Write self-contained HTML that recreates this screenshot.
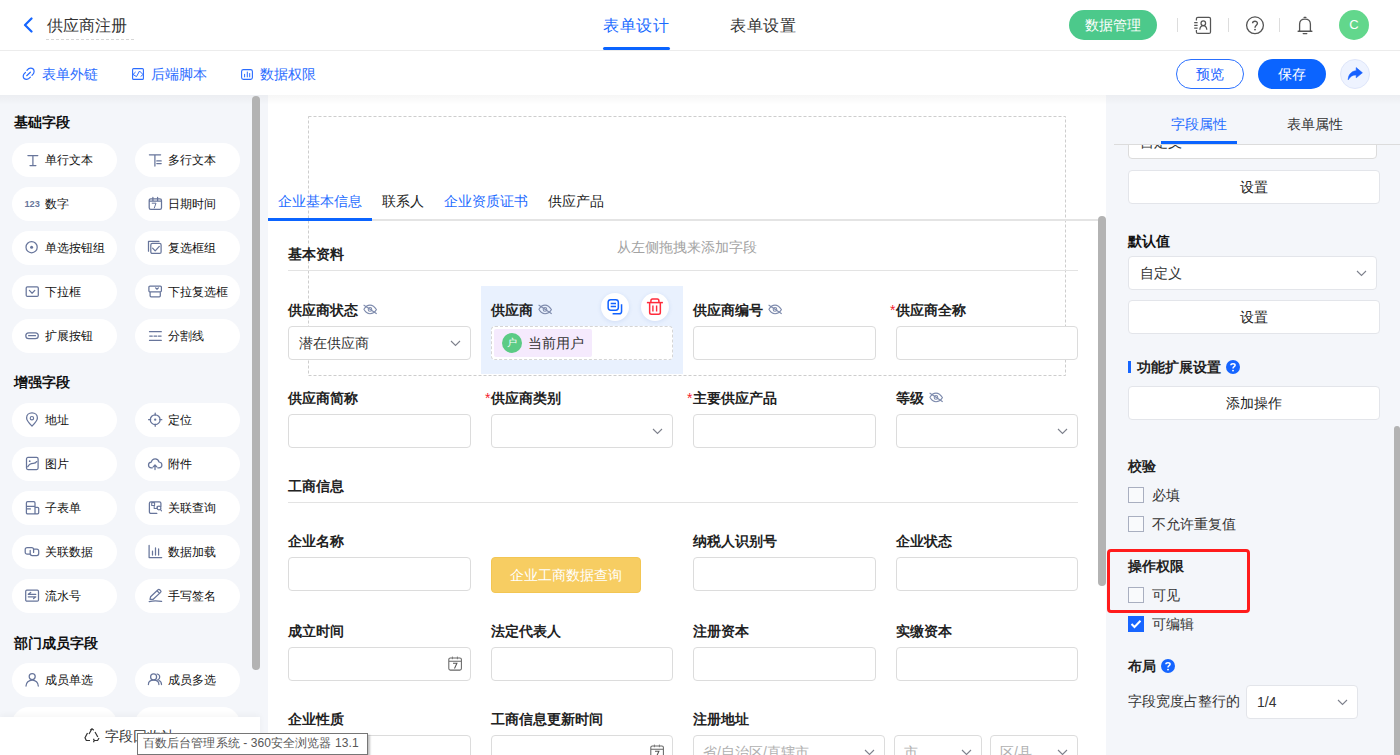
<!DOCTYPE html>
<html><head><meta charset="utf-8">
<style>
*{box-sizing:border-box;margin:0;padding:0}
html,body{width:1400px;height:755px;overflow:hidden;background:#fff}
body{font-family:"Liberation Sans",sans-serif;color:#222;position:relative;font-size:14px}
.a{position:absolute}
.t{position:absolute;white-space:nowrap;line-height:20px}
.hdr{left:0;top:0;width:1400px;height:51px;border-bottom:1px solid #ececec;background:#fff}
.tb{left:0;top:51px;width:1400px;height:44px;background:#fff}
.lp{left:0;top:95px;width:268px;height:660px;background:#f4f6fa}
.cp{left:268px;top:95px;width:838px;height:660px;background:#fff}
.rp{left:1106px;top:95px;width:294px;height:660px;background:#f4f6fa}
.shadow{left:0;top:95px;width:1400px;height:10px;background:linear-gradient(rgba(0,0,0,0.035),rgba(0,0,0,0))}
.h3{font-weight:700;font-size:14px;color:#111;-webkit-text-stroke:0}
.pill{position:absolute;width:105px;height:34px;border-radius:17px;background:#fff}
.pill .ic{position:absolute;left:13px;top:9px;width:16px;height:16px}
.pill .tx{position:absolute;left:33px;top:7px;font-size:12px;line-height:20px;color:#111;white-space:nowrap}
.lbl{font-weight:700;font-size:14px;color:#222;-webkit-text-stroke:0}
.inp{position:absolute;height:34px;border:1px solid #dcdcdc;border-radius:4px;background:#fff}
.req{color:#f5222d}
.sb{position:absolute;background:#b3b3b3;border-radius:4px}
.btnw{position:absolute;background:#fff;border:1px solid #e3e5ea;border-radius:4px;text-align:center;font-size:14px;line-height:32px;color:#222}
.cb{position:absolute;width:16px;height:16px;border:1px solid #a9afc0;border-radius:0;background:#f9fafc}
</style></head><body>
<!-- header -->
<div class="a hdr"></div>
<svg class="a" style="left:22px;top:17px" width="12" height="16" viewBox="0 0 12 16"><path d="M9.5 1.5 L3 8 L9.5 14.5" fill="none" stroke="#1565ff" stroke-width="2.2" stroke-linecap="round" stroke-linejoin="round"/></svg>
<div class="t" style="left:47px;top:15px;font-size:16px;line-height:22px;color:#333">供应商注册</div>
<div class="a" style="left:46px;top:39px;width:88px;height:0;border-top:1px dashed #d6d6d6"></div>
<div class="t" style="left:603px;top:15px;font-size:16px;line-height:22px;letter-spacing:0.7px;color:#1a6bff">表单设计</div>
<div class="a" style="left:603px;top:47px;width:67px;height:3px;border-radius:2px;background:#0a64ff"></div>
<div class="t" style="left:730px;top:15px;font-size:16px;line-height:22px;letter-spacing:0.7px;color:#333">表单设置</div>
<div class="a" style="left:1069px;top:10px;width:88px;height:30px;border-radius:15px;background:#4cc98b;color:#fff;text-align:center;line-height:30px;font-size:14px;font-weight:500">数据管理</div>
<div class="a" style="left:1177px;top:18px;width:1px;height:14px;background:#ddd"></div>
<div class="a" style="left:1228px;top:18px;width:1px;height:14px;background:#ddd"></div>
<div class="a" style="left:1279px;top:18px;width:1px;height:14px;background:#ddd"></div>
<!-- contact icon -->
<svg class="a" style="left:1193px;top:16px" width="19" height="19" viewBox="0 0 19 19"><path d="M3.4 4.6 V2.8 C3.4 1.9 4 1.3 4.9 1.3 H16 C16.9 1.3 17.5 1.9 17.5 2.8 V15.9 C17.5 16.8 16.9 17.4 16 17.4 H4.9 C4 17.4 3.4 16.8 3.4 15.9 V14" fill="none" stroke="#555" stroke-width="1.25"/><circle cx="10.3" cy="7.2" r="2.3" fill="none" stroke="#555" stroke-width="1.25"/><path d="M6.8 13.8 C7 10.8 8.5 9.5 10.3 9.5 C12.1 9.5 13.6 10.8 13.8 13.8" fill="none" stroke="#555" stroke-width="1.25"/><path d="M1.2 6.5h3.4M1.2 9.4h3.4M1.2 12.2h3.4" stroke="#555" stroke-width="1.25"/></svg>
<!-- help -->
<svg class="a" style="left:1245px;top:16px" width="20" height="20" viewBox="0 0 20 20"><circle cx="10" cy="9.3" r="8.4" fill="none" stroke="#555" stroke-width="1.3"/><path d="M7.6 7.3 C7.6 4.6 12.4 4.6 12.4 7.3 C12.4 9.2 10 9.3 10 11.8" fill="none" stroke="#555" stroke-width="1.4"/><circle cx="10" cy="13.6" r="0.95" fill="#555"/></svg>
<!-- bell -->
<svg class="a" style="left:1297px;top:16px" width="16" height="19" viewBox="0 0 16 19"><path d="M7.1 1.4h1.8" stroke="#555" stroke-width="1.3" stroke-linecap="round"/><path d="M2.6 15 V8.2 C2.6 4.8 4.8 3.1 8 3.1 C11.2 3.1 13.4 4.8 13.4 8.2 V15" fill="none" stroke="#555" stroke-width="1.3"/><path d="M1.2 15.3h13.6" stroke="#555" stroke-width="1.5" stroke-linecap="round"/><path d="M6.2 17.6h3.6" stroke="#555" stroke-width="1.3" stroke-linecap="round"/></svg>
<div class="a" style="left:1339px;top:10px;width:30px;height:30px;border-radius:15px;background:#62d78c;color:#fff;text-align:center;line-height:30px;font-size:13px">C</div>

<!-- toolbar -->
<div class="a tb"></div>
<svg class="a" style="left:22px;top:67px" width="14" height="14" viewBox="0 0 14 14"><path d="M4.9 3.4 C6 2 7 1.2 8.6 1.2 C10.6 1.2 12.1 2.8 12.1 4.7 C12.1 6.2 11.2 7.2 10 8.4 M3.4 5.5 C2 6.7 1.2 7.5 1.2 9 C1.2 11 2.8 12.4 4.8 12.4 C6.3 12.4 7.3 11.5 8.4 10.2 M4.7 8.7 L8.4 5.2" fill="none" stroke="#2a6cff" stroke-width="1.2" stroke-linecap="round"/></svg>
<div class="t" style="left:42px;top:64px;color:#2b6cff">表单外链</div>
<svg class="a" style="left:132px;top:68px" width="12" height="12" viewBox="0 0 12 12"><rect x="0.6" y="0.6" width="10.8" height="10.8" rx="1" fill="none" stroke="#2a6cff" stroke-width="1.1"/><path d="M3.6 4 L1 6.5 L4.5 8.6 L7.5 3 L11 6.5 L8.6 8.6" fill="none" stroke="#2a6cff" stroke-width="1" stroke-linejoin="round"/></svg>
<div class="t" style="left:151px;top:64px;color:#2b6cff">后端脚本</div>
<svg class="a" style="left:241px;top:69px" width="12" height="11" viewBox="0 0 12 11"><rect x="0.6" y="0.6" width="10.8" height="9.8" rx="1.8" fill="none" stroke="#2a6cff" stroke-width="1.1"/><path d="M3.6 5.3v2.6M6.3 3v4.9M8.7 4.5v3.4" stroke="#2a6cff" stroke-width="1" stroke-linecap="round"/></svg>
<div class="t" style="left:260px;top:64px;color:#2b6cff">数据权限</div>
<div class="a" style="left:1176px;top:59px;width:68px;height:30px;border:1px solid #2a70ff;border-radius:15px;color:#1a5fff;text-align:center;line-height:28px;font-size:14px;font-weight:500">预览</div>
<div class="a" style="left:1258px;top:59px;width:68px;height:30px;border-radius:15px;background:#0b64ff;color:#fff;text-align:center;line-height:30px;font-size:14px;font-weight:500">保存</div>
<div class="a" style="left:1340px;top:59px;width:30px;height:30px;border-radius:15px;background:#eef3ff;border:1px solid #dfe6fa"></div>
<svg class="a" style="left:1347px;top:67px" width="16" height="14" viewBox="0 0 16 14"><path d="M9.2 0.6 L15.4 5.8 L9.2 10.8 V7.9 C5.4 7.9 3.2 9.4 1.2 12.8 C1.3 7.6 4.4 4.1 9.2 3.7 Z" fill="#1560ff" stroke="#1560ff" stroke-width="0.6" stroke-linejoin="round"/></svg>

<div class="a lp"></div>
<div class="a cp"></div>
<div class="a rp"></div>
<div class="a shadow"></div>
<div class="t h3" style="left:14px;top:112px">基础字段</div>
<div class="pill" style="left:12px;top:143px"><svg class="ic" width="16" height="16" viewBox="0 0 16 16" style="overflow:visible"><path d="M2.9 3.5H12.8M7.9 3.5V13.5M5 13.5H10.9" stroke="#67759b" stroke-width="1.25" fill="none" stroke-linecap="round" stroke-linejoin="round"/></svg><div class="tx">单行文本</div></div>
<div class="pill" style="left:135px;top:143px"><svg class="ic" width="16" height="16" viewBox="0 0 16 16" style="overflow:visible"><path d="M1.4 2.8H12.6M6.9 2.8V14M8.8 8.9H13.2M8.8 11.6H13.2" stroke="#67759b" stroke-width="1.25" fill="none" stroke-linecap="round" stroke-linejoin="round"/></svg><div class="tx">多行文本</div></div>
<div class="pill" style="left:12px;top:187px"><svg class="ic" width="16" height="16" viewBox="0 0 16 16" style="overflow:visible"><text x="-0.6" y="11.2" font-size="9.6" font-weight="700" fill="#67759b" font-family="Liberation Sans" textLength="15.4" lengthAdjust="spacingAndGlyphs">123</text></svg><div class="tx">数字</div></div>
<div class="pill" style="left:135px;top:187px"><svg class="ic" width="16" height="16" viewBox="0 0 16 16" style="overflow:visible"><path d="M2.8 2.8H11.9C12.8 2.8 13.5 3.5 13.5 4.4V11.8C13.5 12.7 12.8 13.4 11.9 13.4H2.8C1.9 13.4 1.2 12.7 1.2 11.8V4.4C1.2 3.5 1.9 2.8 2.8 2.8ZM1.2 5.2H13.5M4.9 1.4V4.6M9.6 1.4V4.6" stroke="#67759b" stroke-width="1.25" fill="none" stroke-linecap="round" stroke-linejoin="round"/><path d="M4.2 7.2H8L6.3 12" stroke="#67759b" stroke-width="1.0" fill="none" stroke-linecap="round" stroke-linejoin="round"/></svg><div class="tx">日期时间</div></div>
<div class="pill" style="left:12px;top:231px"><svg class="ic" width="16" height="16" viewBox="0 0 16 16" style="overflow:visible"><circle cx="6.6" cy="7.2" r="5.6" stroke="#67759b" stroke-width="1.25" fill="none"/><circle cx="6.6" cy="7.2" r="1.5" fill="#67759b"/></svg><div class="tx">单选按钮组</div></div>
<div class="pill" style="left:135px;top:231px"><svg class="ic" width="16" height="16" viewBox="0 0 16 16" style="overflow:visible"><path d="M0.5 11.2V1.3H11" stroke="#67759b" stroke-width="1.25" fill="none" stroke-linecap="round" stroke-linejoin="round"/><path d="M4.3 3.4H11.6C12.4 3.4 13.1 4.1 13.1 4.9V11.9C13.1 12.7 12.4 13.4 11.6 13.4H4.3C3.5 13.4 2.8 12.7 2.8 11.9V4.9C2.8 4.1 3.5 3.4 4.3 3.4ZM4.6 8.1L7.2 10.9L11.3 6.4" stroke="#67759b" stroke-width="1.25" fill="none" stroke-linecap="round" stroke-linejoin="round"/></svg><div class="tx">复选框组</div></div>
<div class="pill" style="left:12px;top:275px"><svg class="ic" width="16" height="16" viewBox="0 0 16 16" style="overflow:visible"><path d="M2.4 2.9H12.1C12.8 2.9 13.3 3.4 13.3 4.1V11.2C13.3 11.9 12.8 12.4 12.1 12.4H2.4C1.7 12.4 1.2 11.9 1.2 11.2V4.1C1.2 3.4 1.7 2.9 2.4 2.9ZM4.4 6.4L7.1 9.2L9.8 6.4" stroke="#67759b" stroke-width="1.25" fill="none" stroke-linecap="round" stroke-linejoin="round"/></svg><div class="tx">下拉框</div></div>
<div class="pill" style="left:135px;top:275px"><svg class="ic" width="16" height="16" viewBox="0 0 16 16" style="overflow:visible"><path d="M2 2H12.3C12.9 2 13.4 2.5 13.4 3.1V6.8C13.4 7.4 12.9 7.9 12.3 7.9H2C1.4 7.9 0.9 7.4 0.9 6.8V3.1C0.9 2.5 1.4 2 2 2ZM2.1 7.9V11.8C2.1 12.4 2.6 12.8 3.1 12.8H11.3C11.9 12.8 12.3 12.4 12.3 11.8V7.9M7.6 3.9L9 5.2L10.4 3.9" stroke="#67759b" stroke-width="1.25" fill="none" stroke-linecap="round" stroke-linejoin="round"/></svg><div class="tx">下拉复选框</div></div>
<div class="pill" style="left:12px;top:319px"><svg class="ic" width="16" height="16" viewBox="0 0 16 16" style="overflow:visible"><rect x="0.8" y="4.8" width="12.5" height="5.9" rx="2.95" stroke="#67759b" stroke-width="1.25" fill="none"/><path d="M3.6 7.7H10.5" stroke="#67759b" stroke-width="1.25" fill="none" stroke-linecap="round" stroke-linejoin="round"/></svg><div class="tx">扩展按钮</div></div>
<div class="pill" style="left:135px;top:319px"><svg class="ic" width="16" height="16" viewBox="0 0 16 16" style="overflow:visible"><path d="M1.5 3.7H13.3M1.5 12.4H13.3" stroke="#67759b" stroke-width="1.25" fill="none" stroke-linecap="round" stroke-linejoin="round"/><path d="M1.7 8.1H4.3M6 8.1H8.8M10.4 8.1H13.1" stroke="#67759b" stroke-width="1.25" fill="none" stroke-linecap="round" stroke-linejoin="round"/></svg><div class="tx">分割线</div></div>
<div class="t h3" style="left:14px;top:372px">增强字段</div>
<div class="pill" style="left:12px;top:403px"><svg class="ic" width="16" height="16" viewBox="0 0 16 16" style="overflow:visible"><path d="M7 14.1C3.6 10.6 1.6 8.4 1.6 5.9C1.6 2.9 4 0.9 7 0.9C10 0.9 12.4 2.9 12.4 5.9C12.4 8.4 10.4 10.6 7 14.1Z" stroke="#67759b" stroke-width="1.25" fill="none" stroke-linecap="round" stroke-linejoin="round"/><circle cx="6.9" cy="6.2" r="1.7" stroke="#67759b" stroke-width="1.15" fill="none"/></svg><div class="tx">地址</div></div>
<div class="pill" style="left:135px;top:403px"><svg class="ic" width="16" height="16" viewBox="0 0 16 16" style="overflow:visible"><circle cx="7.2" cy="7.7" r="4.9" stroke="#67759b" stroke-width="1.25" fill="none"/><circle cx="7.2" cy="7.7" r="1.15" fill="#67759b"/><path d="M7.2 1.1V3.2M7.2 12.2V14.3M0.6 7.7H2.7M11.7 7.7H13.8" stroke="#67759b" stroke-width="1.25" fill="none" stroke-linecap="round" stroke-linejoin="round"/></svg><div class="tx">定位</div></div>
<div class="pill" style="left:12px;top:447px"><svg class="ic" width="16" height="16" viewBox="0 0 16 16" style="overflow:visible"><path d="M3 1.4H11.6C12.4 1.4 13.1 2.1 13.1 2.9V12.1C13.1 12.9 12.4 13.6 11.6 13.6H3C2.2 13.6 1.5 12.9 1.5 12.1V2.9C1.5 2.1 2.2 1.4 3 1.4ZM2.8 10.8C3.8 8.6 5.2 7.4 8.2 7.3C10.2 7.2 11 6.6 11.6 5.6" stroke="#67759b" stroke-width="1.25" fill="none" stroke-linecap="round" stroke-linejoin="round"/><circle cx="4.7" cy="5.2" r="0.9" fill="#67759b"/></svg><div class="tx">图片</div></div>
<div class="pill" style="left:135px;top:447px"><svg class="ic" width="16" height="16" viewBox="0 0 16 16" style="overflow:visible"><path d="M4.3 11.8H3.5C1.8 11.8 0.5 10.6 0.5 9C0.5 7.4 1.7 6.2 3.3 6.1C3.8 4.2 5.3 2.8 7.2 2.8C9.1 2.8 10.6 4.2 11 6C12.6 6.2 13.9 7.4 13.9 9C13.9 10.6 12.6 11.8 11 11.8H9.8M7 13.6V9.2M5.2 10.9L7 9L8.8 10.9" stroke="#67759b" stroke-width="1.25" fill="none" stroke-linecap="round" stroke-linejoin="round"/></svg><div class="tx">附件</div></div>
<div class="pill" style="left:12px;top:491px"><svg class="ic" width="16" height="16" viewBox="0 0 16 16" style="overflow:visible"><path d="M2.6 1.7H8.8C9.5 1.7 10 2.2 10 2.9V13.9H2.6C1.9 13.9 1.4 13.4 1.4 12.7V2.9C1.4 2.2 1.9 1.7 2.6 1.7ZM1.4 6.3H10M1.4 8.9H5.4M10 7.3H12.6C13.2 7.3 13.7 7.8 13.7 8.4V12.8C13.7 13.4 13.2 13.9 12.6 13.9H10" stroke="#67759b" stroke-width="1.25" fill="none" stroke-linecap="round" stroke-linejoin="round"/></svg><div class="tx">子表单</div></div>
<div class="pill" style="left:135px;top:491px"><svg class="ic" width="16" height="16" viewBox="0 0 16 16" style="overflow:visible"><path d="M8.8 13.4H2.9C2.1 13.4 1.4 12.7 1.4 11.9V3.3C1.4 2.5 2.1 1.8 2.9 1.8H11.4C12.2 1.8 12.9 2.5 12.9 3.3V6.5" stroke="#67759b" stroke-width="1.25" fill="none" stroke-linecap="round" stroke-linejoin="round"/><path d="M3.7 2.6V5.4H6.6V2.6ZM6.2 6.3V8.5H9.2V6.3" stroke="#67759b" stroke-width="1.05" fill="none" stroke-linecap="round" stroke-linejoin="round"/><circle cx="11" cy="8" r="1.9" stroke="#67759b" stroke-width="1.15" fill="none"/><path d="M12.4 9.4L13.5 10.9" stroke="#67759b" stroke-width="1.15" fill="none" stroke-linecap="round" stroke-linejoin="round"/></svg><div class="tx">关联查询</div></div>
<div class="pill" style="left:12px;top:535px"><svg class="ic" width="16" height="16" viewBox="0 0 16 16" style="overflow:visible"><path d="M5 10.2H2.2C1.1 10.2 0.2 9.3 0.2 8.2V5.6C0.2 4.5 1.1 3.6 2.2 3.6H6.6C7.7 3.6 8.6 4.5 8.6 5.6V8.4" stroke="#67759b" stroke-width="1.25" fill="none" stroke-linecap="round" stroke-linejoin="round"/><path d="M5.2 6.4V9.5C5.2 10.6 6.1 11.5 7.2 11.5H11.7C12.8 11.5 13.7 10.6 13.7 9.5V7.1C13.7 6 12.8 5.1 11.7 5.1H8.6" stroke="#67759b" stroke-width="1.25" fill="none" stroke-linecap="round" stroke-linejoin="round"/></svg><div class="tx">关联数据</div></div>
<div class="pill" style="left:135px;top:535px"><svg class="ic" width="16" height="16" viewBox="0 0 16 16" style="overflow:visible"><path d="M1.1 1.4V13.5H13.7M4.5 7.2V11M7.5 3.9V11M10.6 4.9V11" stroke="#67759b" stroke-width="1.25" fill="none" stroke-linecap="round" stroke-linejoin="round"/></svg><div class="tx">数据加载</div></div>
<div class="pill" style="left:12px;top:579px"><svg class="ic" width="16" height="16" viewBox="0 0 16 16" style="overflow:visible"><path d="M1.9 2.2H12.3C12.9 2.2 13.5 2.8 13.5 3.4V12C13.5 12.6 12.9 13.2 12.3 13.2H1.9C1.3 13.2 0.7 12.6 0.7 12V3.4C0.7 2.8 1.3 2.2 1.9 2.2ZM3.3 6.3H10.8M5.7 4.4L3.3 6.3M3.3 8.8H10.8M10.8 8.8L8.6 10.6" stroke="#67759b" stroke-width="1.25" fill="none" stroke-linecap="round" stroke-linejoin="round"/></svg><div class="tx">流水号</div></div>
<div class="pill" style="left:135px;top:579px"><svg class="ic" width="16" height="16" viewBox="0 0 16 16" style="overflow:visible"><path d="M2 11.3L2.6 8.8L10 1.8C10.5 1.3 11.2 1.3 11.7 1.8L12.6 2.7C13.1 3.2 13.1 3.9 12.6 4.4L5.2 11.3ZM9 2.8L11.6 5.4M1.2 13.6C5 12.6 9 12.6 13.6 13.4" stroke="#67759b" stroke-width="1.25" fill="none" stroke-linecap="round" stroke-linejoin="round"/></svg><div class="tx">手写签名</div></div>
<div class="t h3" style="left:14px;top:633px">部门成员字段</div>
<div class="pill" style="left:12px;top:663px"><svg class="ic" width="16" height="16" viewBox="0 0 16 16" style="overflow:visible"><circle cx="7.2" cy="4.6" r="3" stroke="#67759b" stroke-width="1.25" fill="none"/><path d="M1 14.1C1 10.5 3.8 8 7.2 8C10.6 8 13.3 10.5 13.3 14.1" stroke="#67759b" stroke-width="1.25" fill="none" stroke-linecap="round" stroke-linejoin="round"/></svg><div class="tx">成员单选</div></div>
<div class="pill" style="left:135px;top:663px"><svg class="ic" width="16" height="16" viewBox="0 0 16 16" style="overflow:visible"><circle cx="5.6" cy="4.9" r="3" stroke="#67759b" stroke-width="1.25" fill="none"/><path d="M0.4 12.5C0.4 9.8 2.7 8.2 5.6 8.2C8.5 8.2 10.9 9.8 10.9 12.5M9.2 2C10.7 2.3 11.7 3.5 11.7 4.9C11.7 6.3 10.9 7.3 9.8 7.8M11 8.5C12.5 9.2 13.5 10.5 13.5 12.5" stroke="#67759b" stroke-width="1.25" fill="none" stroke-linecap="round" stroke-linejoin="round"/></svg><div class="tx">成员多选</div></div>
<div class="pill" style="left:12px;top:707px"></div>
<div class="pill" style="left:135px;top:707px"></div>
<div class="sb" style="left:252px;top:96px;width:8px;height:574px"></div><svg class="a" style="left:308px;top:116px" width="758" height="260" viewBox="0 0 758 260"><rect x="0.5" y="0.5" width="757" height="259" fill="none" stroke="#cdcdcd" stroke-width="1" stroke-dasharray="3 2"/></svg>
<div class="t" style="left:617px;top:237px;color:#a3a3a3">从左侧拖拽来添加字段</div>
<div class="a" style="left:268px;top:219px;width:830px;height:2px;background:#e4e4e4"></div>
<div class="a" style="left:268px;top:218px;width:104px;height:3px;background:#0b64ff"></div>
<div class="t" style="left:278px;top:191px;color:#1e6cff">企业基本信息</div>
<div class="t" style="left:382px;top:191px;color:#222">联系人</div>
<div class="t" style="left:444px;top:191px;color:#1e6cff">企业资质证书</div>
<div class="t" style="left:548px;top:191px;color:#222">供应产品</div>
<div class="t lbl" style="left:288px;top:244px">基本资料</div>
<div class="a" style="left:288px;top:270px;width:790px;height:1px;background:#e3e3e3"></div>
<div class="a" style="left:481px;top:286px;width:202px;height:88px;background:#e9f1fe"></div>
<div class="t lbl" style="left:288px;top:300px">供应商状态</div>
<svg class="a" style="left:363px;top:304px" width="15" height="11" viewBox="0 0 15 11"><path d="M0.9 5.3 C2.6 2.4 4.6 1.1 7 1.1 C9.4 1.1 11.5 2.4 13.4 5.6 C11.5 8.6 9.4 9.7 7 9.7 C4.6 9.7 2.6 8.5 0.9 5.3 Z" fill="none" stroke="#7e8bad" stroke-width="1.05"/><circle cx="7" cy="5.4" r="1.8" fill="none" stroke="#7e8bad" stroke-width="1.05"/><path d="M0.6 1 L13.7 9.8" stroke="#7e8bad" stroke-width="1.05"/></svg>
<div class="inp" style="left:288px;top:326px;width:183px;height:34px"></div>
<svg class="a" style="left:450px;top:340px" width="11" height="7" viewBox="0 0 11 7"><path d="M1 1 L5.5 5.5 L10 1" fill="none" stroke="#7d818c" stroke-width="1.1"/></svg>
<div class="t" style="left:299px;top:333px;color:#333">潜在供应商</div>
<div class="t lbl" style="left:491px;top:300px">供应商</div>
<svg class="a" style="left:538px;top:304px" width="15" height="11" viewBox="0 0 15 11"><path d="M0.9 5.3 C2.6 2.4 4.6 1.1 7 1.1 C9.4 1.1 11.5 2.4 13.4 5.6 C11.5 8.6 9.4 9.7 7 9.7 C4.6 9.7 2.6 8.5 0.9 5.3 Z" fill="none" stroke="#7e8bad" stroke-width="1.05"/><circle cx="7" cy="5.4" r="1.8" fill="none" stroke="#7e8bad" stroke-width="1.05"/><path d="M0.6 1 L13.7 9.8" stroke="#7e8bad" stroke-width="1.05"/></svg>
<div class="a" style="left:491px;top:326px;width:182px;height:34px;border:1px dashed #d5d5d5;border-radius:4px;background:#fff"></div>
<div class="a" style="left:494px;top:329px;width:98px;height:28px;border-radius:2px;background:#f5eafd"></div>
<div class="a" style="left:502px;top:333px;width:20px;height:20px;border-radius:10px;background:#5bcb85;color:#fff;font-size:10px;line-height:20px;text-align:center">户</div>
<div class="t" style="left:528px;top:333px;color:#333">当前用户</div>
<div class="a" style="left:601px;top:293px;width:28px;height:28px;border-radius:14px;background:#fff;box-shadow:0 1px 4px rgba(30,80,180,0.12)"></div>
<svg class="a" style="left:607px;top:298px" width="17" height="17" viewBox="0 0 17 17"><rect x="1.15" y="1.65" width="10.2" height="10.5" rx="2.6" fill="none" stroke="#1262ff" stroke-width="1.5"/><path d="M3.7 5.4H9M3.7 8.6H9" stroke="#1262ff" stroke-width="1.5"/><path d="M14.55 6.3 V13.5 C14.55 14.9 13.5 15.85 12.1 15.85 H5.6" fill="none" stroke="#1262ff" stroke-width="1.5"/></svg>
<div class="a" style="left:641px;top:293px;width:28px;height:28px;border-radius:14px;background:#fff;box-shadow:0 1px 4px rgba(30,80,180,0.12)"></div>
<svg class="a" style="left:646px;top:298px" width="18" height="18" viewBox="0 0 18 18"><path d="M0.9 4.6 H16.9" stroke="#ff2b3b" stroke-width="1.5"/><path d="M4.9 4.6 V3 C4.9 1.9 5.4 1.1 6.5 1.1 H11.3 C12.4 1.1 12.9 1.9 12.9 3 V4.6" fill="none" stroke="#ff2b3b" stroke-width="1.5"/><path d="M3.65 4.6 V14.4 C3.65 15.5 4.3 16.15 5.4 16.15 H12.6 C13.7 16.15 14.35 15.5 14.35 14.4 V4.6" fill="none" stroke="#ff2b3b" stroke-width="1.5"/><path d="M6.9 7.4 V13.4 M10.6 7.4 V13.4" stroke="#ff2b3b" stroke-width="1.4"/></svg>
<div class="t lbl" style="left:693px;top:300px">供应商编号</div>
<svg class="a" style="left:768px;top:304px" width="15" height="11" viewBox="0 0 15 11"><path d="M0.9 5.3 C2.6 2.4 4.6 1.1 7 1.1 C9.4 1.1 11.5 2.4 13.4 5.6 C11.5 8.6 9.4 9.7 7 9.7 C4.6 9.7 2.6 8.5 0.9 5.3 Z" fill="none" stroke="#7e8bad" stroke-width="1.05"/><circle cx="7" cy="5.4" r="1.8" fill="none" stroke="#7e8bad" stroke-width="1.05"/><path d="M0.6 1 L13.7 9.8" stroke="#7e8bad" stroke-width="1.05"/></svg>
<div class="inp" style="left:693px;top:326px;width:183px;height:34px"></div>
<div class="t req" style="left:890px;top:300px;font-size:14px">*</div>
<div class="t lbl" style="left:896px;top:300px">供应商全称</div>
<div class="inp" style="left:896px;top:326px;width:182px;height:34px"></div>
<div class="t lbl" style="left:288px;top:388px">供应商简称</div>
<div class="inp" style="left:288px;top:414px;width:183px;height:34px"></div>
<div class="t req" style="left:485px;top:388px;font-size:14px">*</div>
<div class="t lbl" style="left:491px;top:388px">供应商类别</div>
<div class="inp" style="left:491px;top:414px;width:182px;height:34px"></div>
<svg class="a" style="left:652px;top:428px" width="11" height="7" viewBox="0 0 11 7"><path d="M1 1 L5.5 5.5 L10 1" fill="none" stroke="#7d818c" stroke-width="1.1"/></svg>
<div class="t req" style="left:687px;top:388px;font-size:14px">*</div>
<div class="t lbl" style="left:693px;top:388px">主要供应产品</div>
<div class="inp" style="left:693px;top:414px;width:183px;height:34px"></div>
<div class="t lbl" style="left:896px;top:388px">等级</div>
<svg class="a" style="left:929px;top:392px" width="15" height="11" viewBox="0 0 15 11"><path d="M0.9 5.3 C2.6 2.4 4.6 1.1 7 1.1 C9.4 1.1 11.5 2.4 13.4 5.6 C11.5 8.6 9.4 9.7 7 9.7 C4.6 9.7 2.6 8.5 0.9 5.3 Z" fill="none" stroke="#7e8bad" stroke-width="1.05"/><circle cx="7" cy="5.4" r="1.8" fill="none" stroke="#7e8bad" stroke-width="1.05"/><path d="M0.6 1 L13.7 9.8" stroke="#7e8bad" stroke-width="1.05"/></svg>
<div class="inp" style="left:896px;top:414px;width:182px;height:34px"></div>
<svg class="a" style="left:1057px;top:428px" width="11" height="7" viewBox="0 0 11 7"><path d="M1 1 L5.5 5.5 L10 1" fill="none" stroke="#7d818c" stroke-width="1.1"/></svg>
<div class="t lbl" style="left:288px;top:476px">工商信息</div>
<div class="a" style="left:288px;top:502px;width:790px;height:1px;background:#e3e3e3"></div>
<div class="t lbl" style="left:288px;top:531px">企业名称</div>
<div class="inp" style="left:288px;top:557px;width:183px;height:34px"></div>
<div class="a" style="left:491px;top:557px;width:150px;height:36px;border-radius:4px;background:#f7cd62;border:1px solid #f3c653;color:#fff;text-align:center;line-height:34px;font-size:14px;font-weight:500">企业工商数据查询</div>
<div class="t lbl" style="left:693px;top:531px">纳税人识别号</div>
<div class="inp" style="left:693px;top:557px;width:183px;height:34px"></div>
<div class="t lbl" style="left:896px;top:531px">企业状态</div>
<div class="inp" style="left:896px;top:557px;width:182px;height:34px"></div>
<div class="t lbl" style="left:288px;top:621px">成立时间</div>
<div class="inp" style="left:288px;top:647px;width:183px;height:34px"></div>
<svg class="a" style="left:448px;top:656px" width="15" height="16" viewBox="0 0 15 16"><path d="M2.3 1.9H11.9C12.7 1.9 13.4 2.6 13.4 3.4V12.6C13.4 13.4 12.7 14.1 11.9 14.1H2.3C1.5 14.1 0.8 13.4 0.8 12.6V3.4C0.8 2.6 1.5 1.9 2.3 1.9ZM0.8 5.3H13.4" fill="none" stroke="#666" stroke-width="1.05"/><path d="M4.4 0.6V3.2M9.4 0.6V3.2" stroke="#777" stroke-width="1"/><path d="M5 7.3H8.9L6.5 12.5" fill="none" stroke="#555" stroke-width="1.05"/></svg>
<div class="t lbl" style="left:491px;top:621px">法定代表人</div>
<div class="inp" style="left:491px;top:647px;width:182px;height:34px"></div>
<div class="t lbl" style="left:693px;top:621px">注册资本</div>
<div class="inp" style="left:693px;top:647px;width:183px;height:34px"></div>
<div class="t lbl" style="left:896px;top:621px">实缴资本</div>
<div class="inp" style="left:896px;top:647px;width:182px;height:34px"></div>
<div class="t lbl" style="left:288px;top:709px">企业性质</div>
<div class="inp" style="left:288px;top:735px;width:183px;height:34px"></div>
<div class="t lbl" style="left:491px;top:709px">工商信息更新时间</div>
<div class="inp" style="left:491px;top:735px;width:182px;height:34px"></div>
<svg class="a" style="left:650px;top:744px" width="15" height="16" viewBox="0 0 15 16"><path d="M2.3 1.9H11.9C12.7 1.9 13.4 2.6 13.4 3.4V12.6C13.4 13.4 12.7 14.1 11.9 14.1H2.3C1.5 14.1 0.8 13.4 0.8 12.6V3.4C0.8 2.6 1.5 1.9 2.3 1.9ZM0.8 5.3H13.4" fill="none" stroke="#666" stroke-width="1.05"/><path d="M4.4 0.6V3.2M9.4 0.6V3.2" stroke="#777" stroke-width="1"/><path d="M5 7.3H8.9L6.5 12.5" fill="none" stroke="#555" stroke-width="1.05"/></svg>
<div class="t lbl" style="left:693px;top:709px">注册地址</div>
<div class="inp" style="left:693px;top:735px;width:192px;height:34px"></div>
<svg class="a" style="left:864px;top:749px" width="11" height="7" viewBox="0 0 11 7"><path d="M1 1 L5.5 5.5 L10 1" fill="none" stroke="#7d818c" stroke-width="1.1"/></svg>
<div class="t" style="left:703px;top:742px;color:#b0b0b0">省/自治区/直辖市</div>
<div class="inp" style="left:894px;top:735px;width:88px;height:34px"></div>
<svg class="a" style="left:961px;top:749px" width="11" height="7" viewBox="0 0 11 7"><path d="M1 1 L5.5 5.5 L10 1" fill="none" stroke="#7d818c" stroke-width="1.1"/></svg>
<div class="t" style="left:904px;top:742px;color:#b0b0b0">市</div>
<div class="inp" style="left:990px;top:735px;width:88px;height:34px"></div>
<svg class="a" style="left:1057px;top:749px" width="11" height="7" viewBox="0 0 11 7"><path d="M1 1 L5.5 5.5 L10 1" fill="none" stroke="#7d818c" stroke-width="1.1"/></svg>
<div class="t" style="left:1000px;top:742px;color:#b0b0b0">区/县</div>
<div class="sb" style="left:1098px;top:216px;width:8px;height:370px"></div><div class="a" style="left:1106px;top:145px;width:288px;height:20px;overflow:hidden"><div class="inp" style="left:22px;top:-20px;width:249px;height:34px"></div><div class="t" style="left:34px;top:-13px;color:#333">自定义</div></div>
<div class="a" style="left:1114px;top:144px;width:286px;height:1px;background:#dcdcdc"></div>
<div class="t" style="left:1171px;top:114px;color:#1e6cff">字段属性</div>
<div class="t" style="left:1287px;top:114px;color:#333">表单属性</div>
<div class="a" style="left:1161px;top:141px;width:76px;height:3px;background:#0b64ff"></div>
<div class="btnw" style="left:1128px;top:170px;width:252px;height:34px">设置</div>
<div class="t lbl" style="left:1128px;top:231px;color:#111">默认值</div>
<div class="inp" style="left:1128px;top:256px;width:249px;height:34px;border-color:#e3e5ea"></div>
<div class="t" style="left:1140px;top:263px;color:#333">自定义</div>
<svg class="a" style="left:1356px;top:270px" width="11" height="7" viewBox="0 0 11 7"><path d="M1 1 L5.5 5.5 L10 1" fill="none" stroke="#7d818c" stroke-width="1.1"/></svg>
<div class="btnw" style="left:1128px;top:300px;width:252px;height:34px">设置</div>
<div class="a" style="left:1128px;top:361px;width:3px;height:12px;background:#1565ff"></div>
<div class="t lbl" style="left:1137px;top:357px;color:#222">功能扩展设置</div>
<svg class="a" style="left:1226px;top:360px" width="14" height="14" viewBox="0 0 14 14"><circle cx="7" cy="7" r="7" fill="#1565ff"/><path d="M4.9 5.3 C4.9 3.2 9.1 3.2 9.1 5.3 C9.1 6.7 7 6.6 7 8.4" fill="none" stroke="#fff" stroke-width="1.5"/><circle cx="7" cy="10.6" r="0.95" fill="#fff"/></svg>
<div class="btnw" style="left:1128px;top:386px;width:252px;height:34px">添加操作</div>
<div class="t lbl" style="left:1128px;top:456px;color:#222">校验</div>
<div class="cb" style="left:1128px;top:487px"></div>
<div class="t" style="left:1152px;top:485px;color:#333">必填</div>
<div class="cb" style="left:1128px;top:516px"></div>
<div class="t" style="left:1152px;top:514px;color:#333">不允许重复值</div>
<div class="t lbl" style="left:1128px;top:556px;color:#222">操作权限</div>
<div class="cb" style="left:1128px;top:587px"></div>
<div class="t" style="left:1152px;top:585px;color:#333">可见</div>
<div class="cb" style="left:1128px;top:616px;background:#1765ff;border-color:#1765ff"></div>
<svg class="a" style="left:1130px;top:619px" width="12" height="10" viewBox="0 0 12 10"><path d="M1.5 5 L4.5 8 L10.5 1.8" fill="none" stroke="#fff" stroke-width="2"/></svg>
<div class="t" style="left:1152px;top:614px;color:#333">可编辑</div>
<div class="a" style="left:1107px;top:549px;width:143px;height:64px;border:3px solid #ff1c1c;border-radius:4px"></div>
<div class="t lbl" style="left:1128px;top:656px;color:#222">布局</div>
<svg class="a" style="left:1161px;top:659px" width="14" height="14" viewBox="0 0 14 14"><circle cx="7" cy="7" r="7" fill="#1565ff"/><path d="M4.9 5.3 C4.9 3.2 9.1 3.2 9.1 5.3 C9.1 6.7 7 6.6 7 8.4" fill="none" stroke="#fff" stroke-width="1.5"/><circle cx="7" cy="10.6" r="0.95" fill="#fff"/></svg>
<div class="t" style="left:1128px;top:691px;color:#333">字段宽度占整行的</div>
<div class="inp" style="left:1246px;top:685px;width:112px;height:34px;border-color:#e3e5ea"></div>
<div class="t" style="left:1257px;top:692px;color:#333">1/4</div>
<svg class="a" style="left:1337px;top:699px" width="11" height="7" viewBox="0 0 11 7"><path d="M1 1 L5.5 5.5 L10 1" fill="none" stroke="#7d818c" stroke-width="1.1"/></svg>
<div class="sb" style="left:1394px;top:426px;width:6px;height:340px;border-radius:3px"></div>
<div class="a" style="left:0;top:717px;width:260px;height:38px;background:#fff;box-shadow:0 -2px 6px rgba(0,0,0,0.04)"></div>
<svg class="a" style="left:84px;top:728px" width="16" height="15" viewBox="0 0 16 15"><path d="M6.2 2.2 L8 0.8 L9.8 2.2 M8 0.8 L5 6 M11 4 L13.8 9" fill="none" stroke="#333" stroke-width="1.2"/><path d="M3.5 5 L1 9.8 L2.3 12.5 H6 M10 12.5 H13.6 L15 10 M9.5 10.7 L10.2 12.5 L9.5 14.2" fill="none" stroke="#333" stroke-width="1.2"/></svg>
<div class="t" style="left:105px;top:726px;color:#333">字段回收站</div>
<div class="a" style="left:137px;top:733px;width:231px;height:22px;background:#fff;border:1px solid #767676;box-shadow:2px 2px 2px rgba(0,0,0,0.25)"></div>
<div class="t" style="left:143px;top:734px;font-size:12px;line-height:18px;letter-spacing:0.1px;color:#575757">百数后台管理系统 - 360安全浏览器 13.1</div></body></html>
